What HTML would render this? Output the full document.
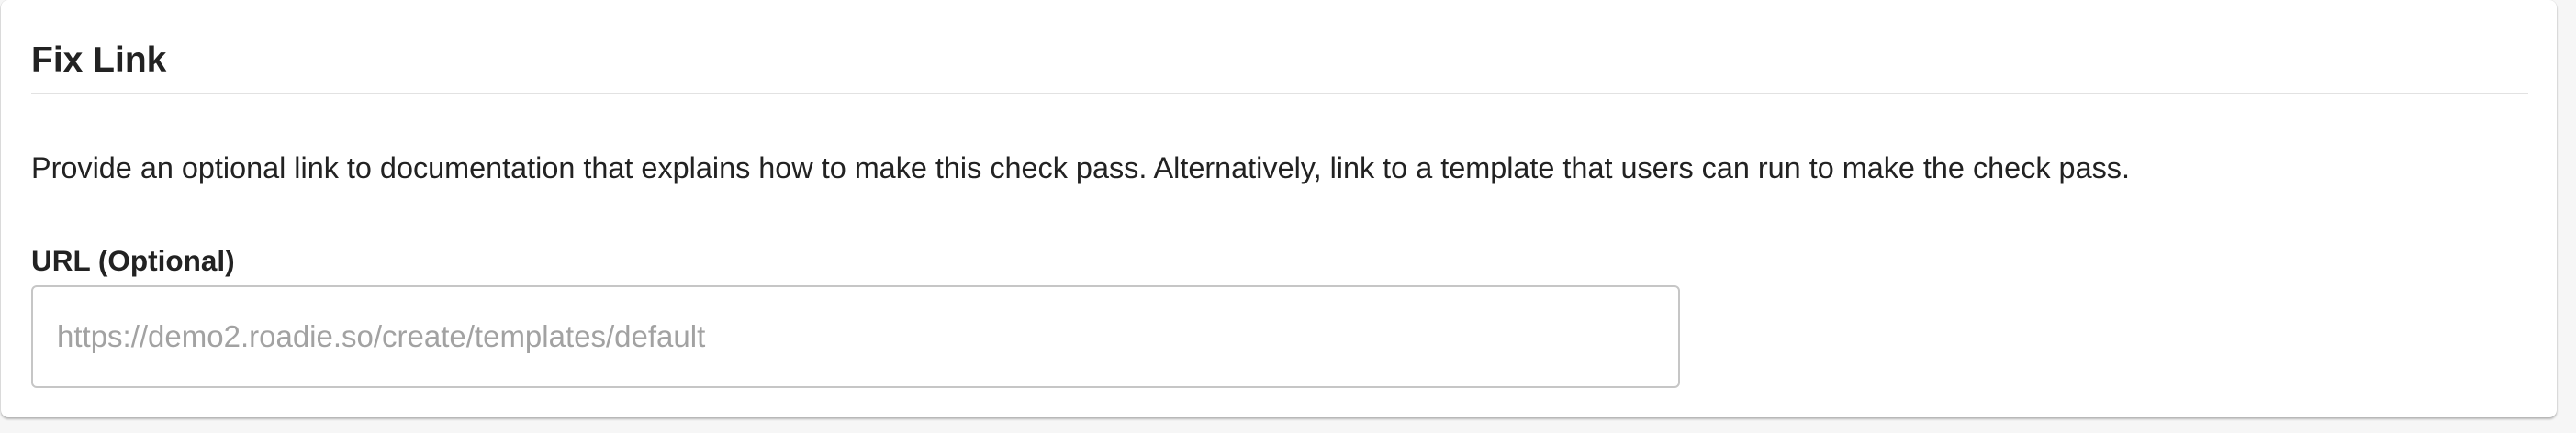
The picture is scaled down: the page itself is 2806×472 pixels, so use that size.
<!DOCTYPE html>
<html><head><meta charset="utf-8"><style>
html,body{margin:0;padding:0;width:2806px;height:472px;background:#f6f6f6;overflow:hidden;font-family:"Liberation Sans",Arial,sans-serif;}
.card{position:absolute;left:1px;top:0;width:2784px;height:455px;background:#fff;border-radius:8px;box-shadow:0 2px 2px rgba(0,0,0,0.25),0 0 1px rgba(0,0,0,0.2);}
.t{position:absolute;left:33px;top:43px;font-size:39px;font-weight:bold;color:#222;line-height:46px;}
.hr{position:absolute;left:33px;top:101px;width:2720px;height:2px;background:#e2e2e2;}
.p{position:absolute;left:33px;top:164px;font-size:32.4px;color:#222;line-height:38px;white-space:nowrap;}
.l{position:absolute;left:33px;top:265px;font-size:31.5px;font-weight:bold;color:#222;line-height:38px;}
.in{position:absolute;left:33px;top:311px;width:1796px;height:112px;border:2px solid #c6c6c6;border-radius:6px;box-sizing:border-box;}
.ph{position:absolute;left:26px;top:35px;font-size:33px;color:#a2a2a2;line-height:38px;white-space:nowrap;}
</style></head><body>
<div class="card">
<div class="t">Fix Link</div>
<div class="hr"></div>
<div class="p">Provide an optional link to documentation that explains how to make this check pass. Alternatively, link to a template that users can run to make the check pass.</div>
<div class="l">URL (Optional)</div>
<div class="in"><div class="ph">https://demo2.roadie.so/create/templates/default</div></div>
</div>
</body></html>
